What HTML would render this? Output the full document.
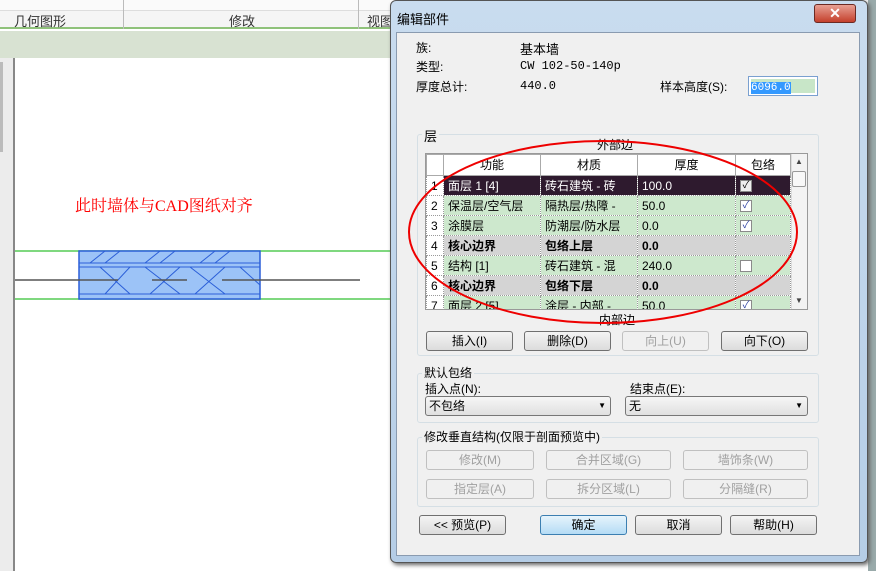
<!DOCTYPE html>
<html><head><meta charset="utf-8"><style>
*{margin:0;padding:0;box-sizing:border-box}
body{width:876px;height:571px;position:relative;overflow:hidden;background:#fff;font-family:"Liberation Sans","Noto Sans CJK SC",sans-serif;font-size:12px;color:#000}
.a{position:absolute}
.btn{position:absolute;height:20px;border:1px solid #707070;border-radius:3px;background:linear-gradient(#f4f4f4,#dcdcdc);text-align:center;line-height:18px;font-size:12px}
.dis{border-color:#c0c0c0;background:#f0f0f0;color:#a0a0a0}
.grp{position:absolute;border:1px solid #d5dfe5;border-radius:3px}
.lg{position:absolute;background:#f0f0f0;padding:0 2px}
table{border-collapse:collapse;position:absolute;left:0;top:0}
tr{height:20px}
td{height:20px;border:1px dotted #999;padding:0 4px;white-space:nowrap;overflow:hidden;font-size:12px;line-height:18px}
.cb{display:inline-block;width:12px;height:12px;border:1px solid #8a8a8a;background:#fff;font-size:10px;line-height:10px;text-align:center;color:#2a3ea0;vertical-align:middle}
</style></head><body>
<!-- ribbon -->
<div class="a" style="left:0;top:0;width:390px;height:29px;background:#f5f5f5;border-bottom:2px solid #8fc27a"></div>
<div class="a" style="left:0;top:0;width:390px;height:11px;background:#fafafa;border-bottom:1px solid #ddd"></div>
<div class="a" style="left:123px;top:0;width:1px;height:29px;background:#bbb"></div>
<div class="a" style="left:358px;top:0;width:1px;height:29px;background:#bbb"></div>
<div class="a" style="left:14px;top:11px;font-size:13px;color:#333">几何图形</div>
<div class="a" style="left:229px;top:11px;font-size:13px;color:#333">修改</div>
<div class="a" style="left:367px;top:11px;font-size:13px;color:#333">视图</div>
<div class="a" style="left:0;top:31px;width:390px;height:27px;background:#d8e2d2"></div>
<div class="a" style="left:0;top:58px;width:15px;height:513px;background:#ececec;border-right:2px solid #888"></div>
<div class="a" style="left:0;top:62px;width:3px;height:90px;background:#bbb"></div>
<!-- canvas -->
<div class="a" style="left:75px;top:193px;color:#f00;font-family:'Liberation Serif','Noto Serif CJK SC',serif;font-size:16px">此时墙体与CAD图纸对齐</div>
<svg class="a" style="left:15px;top:245px" width="375" height="60">
<line x1="0" y1="6" x2="375" y2="6" stroke="#5c5" stroke-width="1.5"/>
<line x1="0" y1="54" x2="375" y2="54" stroke="#5c5" stroke-width="1.5"/>
<rect x="64" y="6" width="181" height="48" fill="#9cc3f7" stroke="#2b5fd8" stroke-width="1.5"/>
<line x1="64" y1="18" x2="245" y2="18" stroke="#2b5fd8"/><line x1="64" y1="22" x2="245" y2="22" stroke="#2b5fd8"/>
<line x1="64" y1="49" x2="245" y2="49" stroke="#2b5fd8"/>
<g stroke="#2b5fd8"><path d="M75 18L90 6M90 18L105 6M130 18L145 6M145 18L160 6M185 18L200 6M200 18L215 6"/>
<path d="M85 22L115 49M115 22L90 49M130 22L165 49M165 22L135 49M175 22L210 49M210 22L180 49M225 22L245 40"/></g>
<line x1="0" y1="35" x2="103" y2="35" stroke="#555" stroke-width="1.5"/>
<line x1="137" y1="35" x2="172" y2="35" stroke="#555" stroke-width="1.5"/>
<line x1="207" y1="35" x2="345" y2="35" stroke="#555" stroke-width="1.5"/>
</svg>
<!-- right backdrop -->
<div class="a" style="left:868px;top:0;width:8px;height:571px;background:#9aa"></div>
<!-- dialog -->
<div class="a" style="left:390px;top:0;width:478px;height:563px;background:linear-gradient(#c9dcef,#b5cde6);border:1px solid #555;border-radius:6px;box-shadow:2px 2px 4px #666"></div>
<div class="a" style="left:397px;top:9px;font-size:13px">编辑部件</div>
<div class="a" style="left:814px;top:4px;width:42px;height:19px;border:1px solid #6b2a23;border-radius:3px;background:linear-gradient(#e8a093,#c4402c);color:#fff;font-weight:bold;text-align:center;line-height:17px;font-size:14px">✕</div>
<div class="a" style="left:396px;top:32px;width:464px;height:524px;background:#f0f0f0;border:1px solid #8a9bb0"></div>
<div class="a" style="left:416px;top:39px">族:</div><div class="a" style="left:520px;top:39px;font-size:13px">基本墙</div>
<div class="a" style="left:416px;top:58px">类型:</div><div class="a" style="left:520px;top:59px;font-family:'Liberation Mono',monospace;font-size:12px">CW 102-50-140p</div>
<div class="a" style="left:416px;top:78px">厚度总计:</div><div class="a" style="left:520px;top:79px;font-family:'Liberation Mono',monospace;font-size:12px">440.0</div>
<div class="a" style="left:660px;top:78px">样本高度(S):</div>
<div class="a" style="left:748px;top:76px;width:70px;height:20px;border:1px solid #7aa0d0;background:#fff;padding:2px"><div style="background:#c8e6c8;height:14px"><span style="background:#3399ff;color:#fff;font-family:'Liberation Mono',monospace;font-size:11px">6096.0</span></div></div>
<!-- layers group -->
<div class="grp" style="left:417px;top:134px;width:402px;height:222px"></div>
<div class="lg" style="left:422px;top:126px;font-size:13px">层</div>
<div class="a" style="left:597px;top:136px">外部边</div>
<div class="a" style="left:425px;top:153px;width:383px;height:157px;background:#fff;border:1px solid #999"></div>
<div class="a" style="left:426px;top:154px;width:365px;height:155px;overflow:hidden">
<table style="width:364px;table-layout:fixed">
<col style="width:17px"><col style="width:97px"><col style="width:97px"><col style="width:98px"><col style="width:55px">
<tr style="background:#fff;height:21px"><td style="border:1px solid #aaa;height:21px"></td><td style="text-align:center;border:1px solid #aaa">功能</td><td style="text-align:center;border:1px solid #aaa">材质</td><td style="text-align:center;border:1px solid #aaa">厚度</td><td style="text-align:center;border:1px solid #aaa">包络</td></tr>
<tr style="background:#2e1a2e;color:#fff"><td style="background:#fff;color:#000">1</td><td>面层 1 [4]</td><td>砖石建筑 - 砖</td><td>100.0</td><td><span class="cb" style="background:#eee;color:#000">✓</span></td></tr>
<tr style="background:#cde8cd"><td style="background:#fff">2</td><td>保温层/空气层</td><td>隔热层/热障 -</td><td>50.0</td><td><span class="cb">✓</span></td></tr>
<tr style="background:#cde8cd"><td style="background:#fff">3</td><td>涂膜层</td><td>防潮层/防水层</td><td>0.0</td><td><span class="cb">✓</span></td></tr>
<tr style="background:#d4d4d4;font-weight:bold"><td style="background:#fff;font-weight:normal">4</td><td>核心边界</td><td>包络上层</td><td>0.0</td><td></td></tr>
<tr style="background:#cde8cd"><td style="background:#fff">5</td><td>结构 [1]</td><td>砖石建筑 - 混</td><td>240.0</td><td><span class="cb"></span></td></tr>
<tr style="background:#d4d4d4;font-weight:bold"><td style="background:#fff;font-weight:normal">6</td><td>核心边界</td><td>包络下层</td><td>0.0</td><td></td></tr>
<tr style="background:#cde8cd"><td style="background:#fff">7</td><td>面层 2 [5]</td><td>涂层 - 内部 -</td><td>50.0</td><td><span class="cb">✓</span></td></tr>
</table></div>
<div class="a" style="left:791px;top:154px;width:16px;height:155px;background:#f3f3f3;border-left:1px solid #ddd"></div>
<div class="a" style="left:795px;top:157px;font-size:8px;color:#444">▲</div>
<div class="a" style="left:792px;top:171px;width:14px;height:16px;background:#f8f8f8;border:1px solid #999;border-radius:2px"></div>
<div class="a" style="left:795px;top:296px;font-size:8px;color:#444">▼</div>
<div class="a" style="left:599px;top:311px">内部边</div>
<div class="btn" style="left:426px;top:331px;width:87px">插入(I)</div>
<div class="btn" style="left:524px;top:331px;width:87px">删除(D)</div>
<div class="btn dis" style="left:622px;top:331px;width:87px">向上(U)</div>
<div class="btn" style="left:721px;top:331px;width:87px">向下(O)</div>
<!-- wrap group -->
<div class="grp" style="left:417px;top:373px;width:402px;height:50px"></div>
<div class="lg" style="left:422px;top:364px">默认包络</div>
<div class="a" style="left:425px;top:380px">插入点(N):</div>
<div class="a" style="left:630px;top:380px">结束点(E):</div>
<div class="a" style="left:425px;top:396px;width:186px;height:20px;border:1px solid #777;border-radius:3px;background:linear-gradient(#f6f6f6,#e0e0e0);padding-left:3px;line-height:18px">不包络<span style="position:absolute;right:4px;font-size:8px">▼</span></div>
<div class="a" style="left:625px;top:396px;width:183px;height:20px;border:1px solid #777;border-radius:3px;background:linear-gradient(#f6f6f6,#e0e0e0);padding-left:3px;line-height:18px">无<span style="position:absolute;right:4px;font-size:8px">▼</span></div>
<!-- vertical group -->
<div class="grp" style="left:417px;top:437px;width:402px;height:70px"></div>
<div class="lg" style="left:422px;top:428px">修改垂直结构(仅限于剖面预览中)</div>
<div class="btn dis" style="left:426px;top:450px;width:108px">修改(M)</div>
<div class="btn dis" style="left:546px;top:450px;width:125px">合并区域(G)</div>
<div class="btn dis" style="left:683px;top:450px;width:125px">墙饰条(W)</div>
<div class="btn dis" style="left:426px;top:479px;width:108px">指定层(A)</div>
<div class="btn dis" style="left:546px;top:479px;width:125px">拆分区域(L)</div>
<div class="btn dis" style="left:683px;top:479px;width:125px">分隔缝(R)</div>
<div class="btn" style="left:419px;top:515px;width:87px">&lt;&lt; 预览(P)</div>
<div class="btn" style="left:540px;top:515px;width:87px;border-color:#3c7fb1;background:linear-gradient(#e6f4fc,#b5dcf5)">确定</div>
<div class="btn" style="left:635px;top:515px;width:87px">取消</div>
<div class="btn" style="left:730px;top:515px;width:87px">帮助(H)</div>
<!-- ellipse -->
<svg class="a" style="left:0;top:0" width="876" height="571"><ellipse cx="603" cy="232" rx="194" ry="91" fill="none" stroke="#e00" stroke-width="2"/></svg>
</body></html>
